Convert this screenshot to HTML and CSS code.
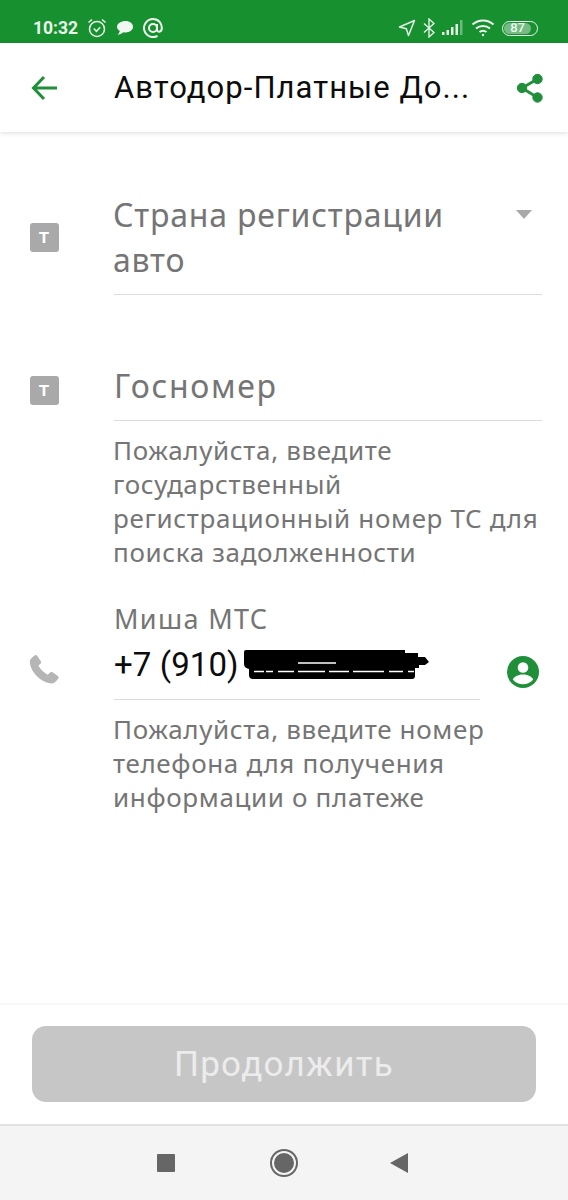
FILE: index.html
```html
<!DOCTYPE html>
<html lang="ru">

<head>
    <meta charset="UTF-8">
    <meta name="viewport" content="width=device-width, initial-scale=1.0">
    <link rel="stylesheet" href="styles.css">
    <title>Автодор-Платные Дороги</title>
</head>

<body>
    <div class="status-bar">
        <span class="status-time">10:32</span>
        <svg class="status-icon" width="22" height="22" viewBox="0 0 22 22" fill="none" stroke="#e4f1e6" stroke-width="1.6">
            <circle cx="11" cy="12" r="7.5"/>
            <path d="M7.8 11.5l2.6 2.8 3.8-4M2.5 5.5l3.5-3M19.5 5.5l-3.5-3"/>
        </svg>
        <svg class="status-icon" width="18" height="16" viewBox="0 0 18 16" fill="#f1f8f2">
            <path d="M9.5 1C13.8 1 17 3.5 17 6.8c0 3.3-3.300 5.700-7.500 5.700-.8 0-1.500-.1-2.200-.2C5.800 13.800 3.600 14.800 1.500 14.800c1.200-1 2-2.300 2.300-3.800C2 9.900 1 8.400 1 6.800 1 3.500 5.200 1 9.500 1z"/>
        </svg>
        <svg class="status-icon at-icon" width="20" height="20" viewBox="0 0 20 20" fill="none" stroke="#f1f8f2" stroke-width="2">
            <circle cx="10" cy="10" r="4"/>
            <path d="M14 6v5.500c0 3 4.500 3 4.800-.8C19.200 5.500 15.500 1 10 1a9 9 0 1 0 4.500 16.800"/>
        </svg>
        <div class="status-right">
            <svg width="18" height="18" viewBox="0 0 18 18" fill="none" stroke="#e4f1e6" stroke-width="1.500" stroke-linejoin="round">
                <path d="M16.500 1.500L1.500 8l6.800 1.800L10.500 16.500z"/>
            </svg>
            <svg width="12" height="20" viewBox="0 0 12 20" fill="none" stroke="#e4f1e6" stroke-width="1.400">
                <path d="M1 5.500l10 9-5 4.500V1l5 4.500-10 9"/>
            </svg>
            <svg width="22" height="16" viewBox="0 0 22 16">
                <rect x="0" y="12" width="2.500" height="3" fill="#e4f1e6"/>
                <rect x="4.500" y="10" width="2.500" height="5" fill="#e4f1e6"/>
                <rect x="9" y="7" width="2.500" height="8" fill="#e4f1e6"/>
                <rect x="13.500" y="4" width="2.500" height="11" fill="#e4f1e6"/>
                <rect x="18" y="0" width="2.500" height="15" fill="#6cb87d"/>
            </svg>
            <svg width="24" height="18" viewBox="0 0 24 18" fill="none" stroke="#f1f8f2" stroke-width="2">
                <path d="M1.500 5.500c6-5.500 15-5.500 21 0M5 9.500c4-3.500 10-3.500 14 0M8.500 13c2-1.500 5-1.500 7 0"/>
                <circle cx="12" cy="16" r="1.200" fill="#f1f8f2" stroke="none"/>
            </svg>
            <div class="battery"><span class="battery-fill">87</span></div>
        </div>
    </div>

    <header class="app-bar">
        <svg class="back-icon" width="26" height="26" viewBox="0 0 26 26" fill="none" stroke="#1f8f3a" stroke-width="3">
            <path d="M26 13H3M13 2L2.500 13 13 24"/>
        </svg>
        <h1 class="app-title">Автодор-Платные До...</h1>
        <svg class="share-icon" width="28" height="30" viewBox="0 0 28 30" fill="#1f8f3a" stroke="#1f8f3a">
            <circle cx="21.500" cy="6" r="4.700"/>
            <circle cx="6" cy="15" r="4.700"/>
            <circle cx="21.500" cy="24.500" r="4.700"/>
            <path d="M21.500 6L6 15l15.500 9.500" fill="none" stroke-width="2.800"/>
        </svg>
    </header>

    <main class="form">
        <div class="field field-country">
            <div class="field-icon"><span class="type-badge">т</span></div>
            <div class="field-body">
                <div class="input-line select-line">
                    <span class="placeholder">Страна регистрации авто</span>
                    <span class="caret"></span>
                </div>
            </div>
        </div>

        <div class="field field-number">
            <div class="field-icon"><span class="type-badge">т</span></div>
            <div class="field-body">
                <div class="input-line">
                    <span class="placeholder">Госномер</span>
                </div>
                <p class="hint">Пожалуйста, введите государственный регистрационный номер ТС для поиска задолженности</p>
            </div>
        </div>

        <div class="field field-phone">
            <div class="field-icon">
                <svg width="30" height="30" viewBox="3 2.500 19 19" fill="#b5b5b5">
                    <path d="M6.600 2.800c.5-.4 1.200-.3 1.600.2l2.300 3.400c.3.500.3 1.100-.1 1.500L9 9.200c.9 2 3.400 4.600 5.800 5.800l1.600-1.400c.4-.4 1-.4 1.500-.1l3.400 2.300c.5.400.6 1.100.2 1.600-1 1.400-2.400 3.200-3.900 3.100C10.600 20 3.900 13.300 3.500 6.700c-.1-1.500 1.700-2.900 3.100-3.900z"/>
                </svg>
            </div>
            <div class="field-body">
                <div class="phone-row">
                    <div class="input-line phone-line">
                        <span class="floating-label">Миша МТС</span>
                        <div class="phone-value">
                            <span>+7 (910)</span>
                            <svg class="scribble" width="186" height="30" viewBox="0 0 186 30">
                                <path d="M1 2Q1 0 3 0H162V3H175V7H182L186 12 182 15H176V18H172V26Q172 29 169 29H10Q6 29 6 25V19Q1 18 1 14z" fill="#000"/>
                                <path d="M11 21.500H21M23 21.500H30M35 21.500H51M55 21.500H82M86 21.500H106M110 21.500H141M146 21.500H160M165 21.500H171M55 13H93" stroke="#fff" stroke-width="1.500" fill="none"/>
                            </svg>
                        </div>
                    </div>
                    <svg class="contact-icon" width="34" height="34" viewBox="0 0 34 34">
                        <circle cx="17" cy="17" r="16" fill="#1f8f3a"/>
                        <circle cx="17" cy="12.500" r="5.300" fill="#fff"/>
                        <path d="M6.800 24.500c2-3.600 6-5 10.200-5s8.200 1.400 10.200 5c-2.300 2.900-6 4.800-10.200 4.800s-7.900-1.900-10.200-4.800z" fill="#fff"/>
                    </svg>
                </div>
                <p class="hint">Пожалуйста, введите номер телефона для получения информации о платеже</p>
            </div>
        </div>
    </main>

    <div class="footer">
        <button class="continue-btn" disabled>Продолжить</button>
    </div>

    <nav class="nav-bar">
        <span class="nav-square"></span>
        <span class="nav-circle"></span>
        <span class="nav-back"></span>
    </nav>
</body>

</html>
```

FILE: styles.css
```css
body {
    margin: 0;
    width: 568px;
    height: 1200px;
    display: flex;
    flex-direction: column;
    overflow: hidden;
    background: #fff;
    font-family: "Noto Sans", sans-serif;
}

.status-bar {
    height: 43px;
    flex: none;
    display: flex;
    align-items: center;
    gap: 8px;
    padding: 13px 30px 0 33px;
    box-sizing: border-box;
    background: #17902f;
    color: #e9f5eb;
}

.status-time {
    font-family: Roboto, sans-serif;
    font-size: 17.500px;
    font-weight: 700;
}

.at-icon {
    margin-left: 1px;
}

.status-right {
    margin-left: auto;
    display: flex;
    align-items: center;
    gap: 7px;
}

.battery {
    width: 36px;
    height: 15px;
    box-sizing: border-box;
    border: 1.500px solid #e9f5eb;
    border-radius: 8px;
    padding: 1px;
    display: flex;
}

.battery-fill {
    width: 85%;
    border-radius: 6px;
    background: #74bb84;
    font-family: Roboto, sans-serif;
    font-size: 13px;
    font-weight: 500;
    line-height: 10px;
    text-align: center;
    color: #f1f8f2;
}

.app-bar {
    height: 89px;
    flex: none;
    display: flex;
    align-items: center;
    padding: 0 24px 0 31px;
    box-sizing: border-box;
    background: #fff;
    box-shadow: 0 1px 5px rgba(0, 0, 0, 0.14);
    position: relative;
}

.app-title {
    margin: 0 0 0 57px;
    flex: 1;
    font-family: Roboto, sans-serif;
    font-size: 31px;
    font-weight: 400;
    letter-spacing: 1.050px;
    color: #0c0c0c;
    white-space: nowrap;
}

.form {
    flex: 1;
    display: flex;
    flex-direction: column;
    padding: 61px 26px 0 0;
}

.field {
    display: flex;
}

.field-icon {
    width: 114px;
    flex: none;
    display: flex;
    justify-content: center;
    padding-right: 26px;
    box-sizing: border-box;
}

.field-body {
    flex: 1;
}

.type-badge {
    width: 29px;
    height: 29px;
    border-radius: 3px;
    background: #a9a9a9;
    color: #fff;
    font-family: Roboto, sans-serif;
    font-size: 21px;
    font-weight: 500;
    line-height: 27px;
    text-align: center;
    margin-top: 30px;
}

.input-line {
    border-bottom: 1px solid #dcdcdc;
}

.placeholder {
    font-size: 32px;
    line-height: 45px;
    letter-spacing: 0.800px;
    color: #757575;
}

.select-line {
    display: flex;
    justify-content: space-between;
    padding-bottom: 12px;
}

.select-line .placeholder {
    width: 360px;
    margin-left: -1px;
    line-height: 44.500px;
}

.caret {
    width: 0;
    height: 0;
    margin: 17px 10px 0 0;
    border-left: 8px solid transparent;
    border-right: 8px solid transparent;
    border-top: 9px solid #a9a9a9;
}

.field-number {
    margin-top: 69px;
}

.field-number .type-badge {
    margin-top: 12px;
}

.field-number .placeholder {
    letter-spacing: 1.700px;
}

.field-number .input-line {
    padding-bottom: 12px;
    margin-top: -1px;
}

.hint {
    margin: 12px 0 0 -1px;
    font-size: 26px;
    line-height: 34px;
    letter-spacing: 0.650px;
    color: #757575;
}

.field-phone {
    margin-top: 32px;
}

.field-phone .field-icon {
    padding-top: 54px;
}

.phone-row {
    display: flex;
    align-items: flex-end;
    justify-content: space-between;
}

.phone-line {
    width: 366px;
    padding-bottom: 12px;
}

.floating-label {
    display: block;
    font-size: 27px;
    line-height: 36px;
    letter-spacing: 1.350px;
    color: #757575;
}

.phone-value {
    display: flex;
    align-items: center;
    margin-top: 6px;
    font-family: Roboto, sans-serif;
    font-size: 33px;
    line-height: 44px;
    letter-spacing: 0.100px;
    color: #0c0c0c;
}

.scribble {
    margin-left: 4px;
}

.contact-icon {
    margin: 0 2px 11px 0;
}

.footer {
    height: 121px;
    flex: none;
    box-sizing: border-box;
    padding: 21px 32px 0;
    border-top: 2px solid #f7f7f7;
}

.continue-btn {
    width: 100%;
    height: 76px;
    border: none;
    border-radius: 14px;
    background: #c6c6c6;
    color: #ececec;
    font-family: Roboto, sans-serif;
    font-size: 35px;
    letter-spacing: 1.300px;
}

.nav-bar {
    height: 76px;
    flex: none;
    box-sizing: border-box;
    border-top: 2px solid #e2e2e2;
    background: #f4f4f4;
    display: flex;
    align-items: center;
    padding: 0 0 0 157px;
}

.nav-square {
    width: 18px;
    height: 18px;
    border-radius: 1px;
    background: #666;
}

.nav-circle {
    width: 20px;
    height: 20px;
    margin-left: 97px;
    border-radius: 50%;
    background: #666;
    border: 2px solid #f4f4f4;
    box-shadow: 0 0 0 2px #666;
    box-sizing: content-box;
}

.nav-back {
    width: 0;
    height: 0;
    margin-left: 94px;
    border-top: 10px solid transparent;
    border-bottom: 10px solid transparent;
    border-right: 18px solid #666;
}
```
